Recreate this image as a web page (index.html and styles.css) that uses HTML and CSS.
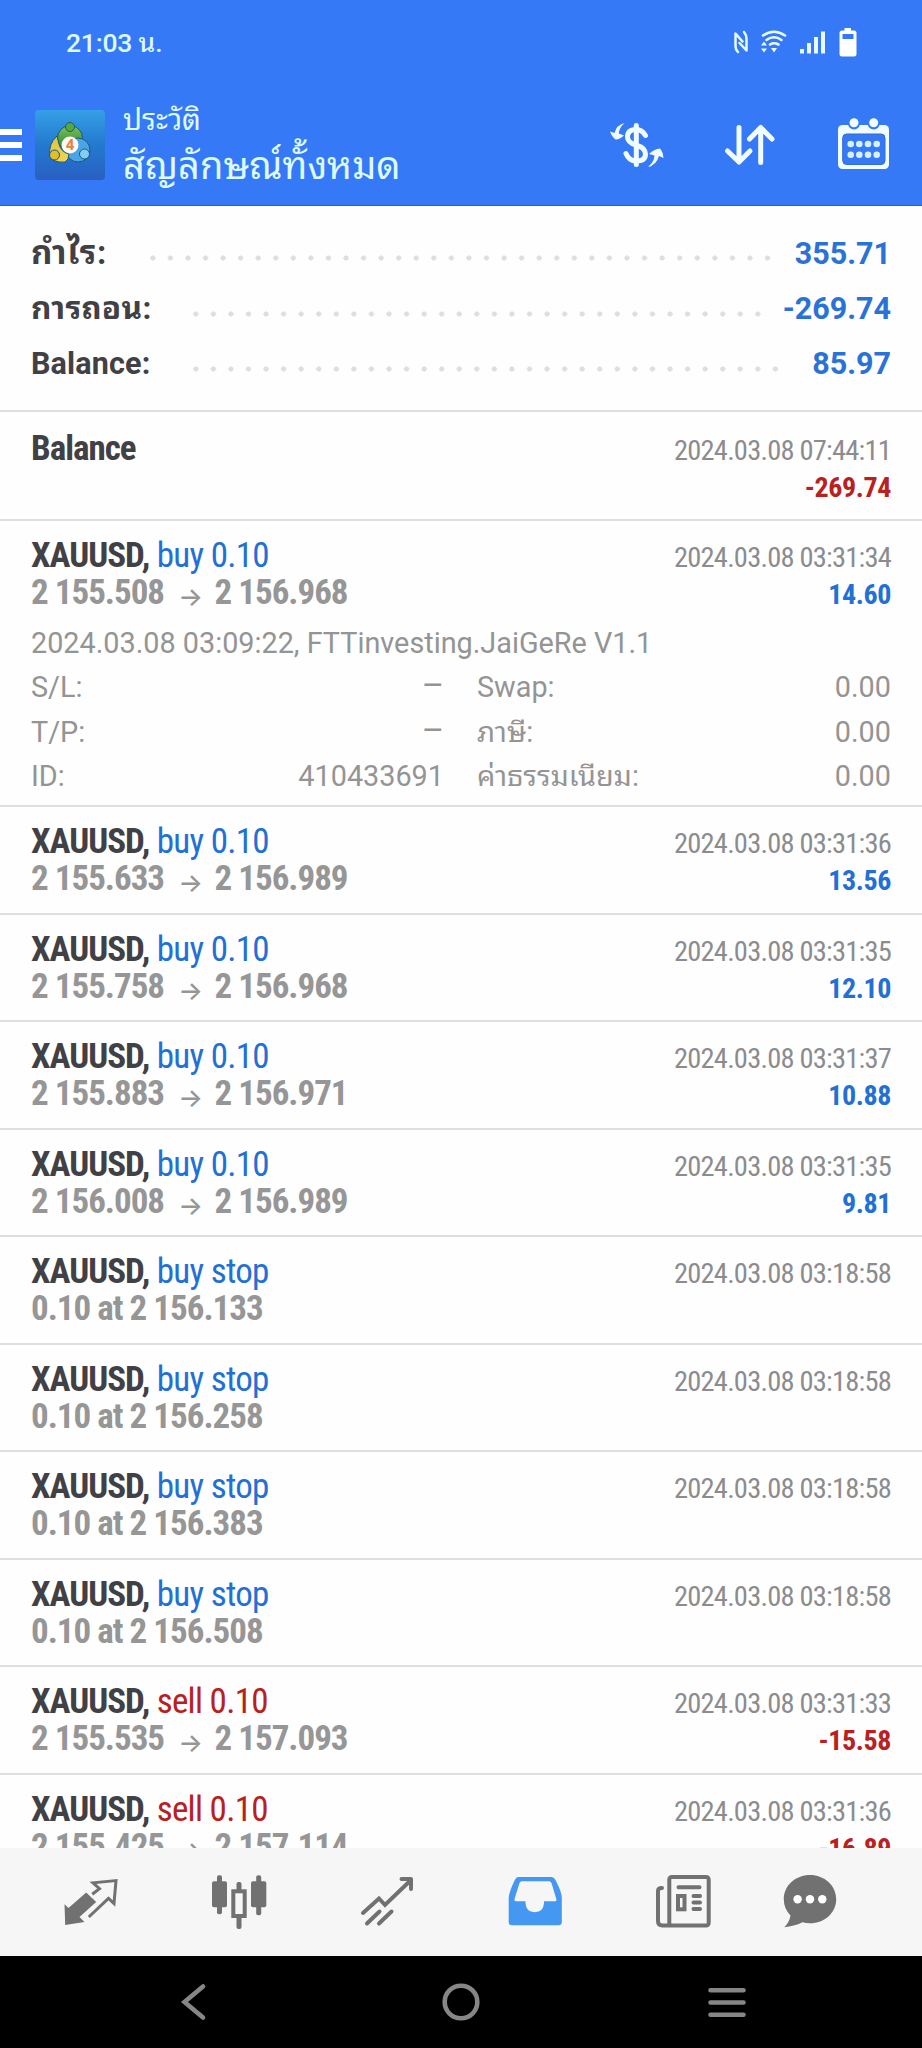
FILE: index.html
```
<!DOCTYPE html>
<html lang="th">
<head>
  <meta charset="UTF-8">
  <meta name="viewport" content="width=device-width, initial-scale=1.0">
  <title>ประวัติ</title>
  <link rel="stylesheet" href="styles.css">
</head>
<body>
  <header class="header">
    <div class="status-bar">
      <span class="clock">21:03 น.</span>
      <div class="status-icons">
        <svg width="14" height="30" viewBox="0 0 14 30" fill="none" stroke="#e6faff" stroke-width="2.5" stroke-linecap="round" stroke-linejoin="round">
          <path d="M4 25 Q1.500 23 1.500 18 V6.500 L8.500 14.500"/>
          <path d="M10 5 Q12.500 8 12.500 12 V23.500 L5.500 16"/>
        </svg>
        <svg width="26" height="30" viewBox="0 0 26 30" fill="none" stroke="#e6faff" stroke-width="2.6" stroke-linecap="round">
          <path d="M2 8.5 Q13 1 24 8.5"/>
          <path d="M5.5 13 Q13 7.5 20.5 13"/>
          <path d="M9 17.5 Q13 15 17.5 17.5"/>
          <path d="M0 18.5 L3 14.5 L6 18.5 Z M0 21.5 L3 25.5 L6 21.5 Z M10 21 H16 L13 25.5 Z" fill="#e6faff" stroke="none"/>
        </svg>
        <svg width="26" height="30" viewBox="0 0 26 30" fill="#e6faff">
          <rect x="0" y="22" width="4" height="4.500"/>
          <rect x="7" y="16" width="4" height="10.500"/>
          <rect x="14" y="10" width="4" height="16.500"/>
          <rect x="21" y="4.500" width="4" height="22"/>
        </svg>
        <svg width="18" height="30" viewBox="0 0 18 30">
          <path d="M5.500 1 H12 V3.500 H15 Q17.500 3.500 17.500 6 V27 Q17.500 29.500 15 29.500 H3 Q.5 29.500 .5 27 V6 Q.5 3.500 3 3.500 H5.500 Z" fill="#fff"/>
          <rect x="3.500" y="7" width="11" height="5" fill="#3579f6"/>
        </svg>
      </div>
    </div>
    <div class="toolbar">
      <svg class="menu" width="22" height="34" viewBox="0 0 22 34" fill="#fff">
        <rect y="1" width="22" height="6"/>
        <rect y="14" width="22" height="6"/>
        <rect y="27" width="22" height="6"/>
      </svg>
      <svg class="app-icon" width="70" height="70" viewBox="0 0 70 70">
        <defs>
          <linearGradient id="bg" x1="0" y1="0" x2="0" y2="1"><stop offset="0" stop-color="#36a0e6"/><stop offset=".5" stop-color="#2379cf"/><stop offset="1" stop-color="#2a5fc2"/></linearGradient>
          <linearGradient id="gr" x1="0" y1="0" x2="0" y2="1"><stop offset="0" stop-color="#7fc356"/><stop offset="1" stop-color="#23803a"/></linearGradient>
          <linearGradient id="ye" x1="0" y1="0" x2="0" y2="1"><stop offset="0" stop-color="#d9c53c"/><stop offset="1" stop-color="#efd558"/></linearGradient>
        </defs>
        <rect width="70" height="70" rx="4" fill="url(#bg)"/>
        <g stroke="#1b5a72" stroke-width="1">
          <circle cx="35" cy="28" r="12.500" fill="url(#gr)"/>
          <circle cx="43" cy="40" r="12" fill="#4aa5e8"/>
          <path d="M22 26 Q13 34 15 46 Q18 53 30 52 Q34 50 34 44 Q26 42 24 34 Z" fill="url(#ye)"/>
          <circle cx="35" cy="17" r="4.500" fill="#58a83c"/>
          <circle cx="19.500" cy="45" r="5" fill="#dfbd2d"/>
          <circle cx="49.500" cy="44" r="5" fill="#83cdf5"/>
        </g>
        <circle cx="35" cy="35" r="8.500" fill="#fffaf3"/>
        <text class="app-number" x="35" y="40" text-anchor="middle">4</text>
      </svg>
      <div class="titles">
        <div class="subtitle">ประวัติ</div>
        <div class="title">สัญลักษณ์ทั้งหมด</div>
      </div>
      <div class="actions">
        <svg width="60" height="60" viewBox="0 0 60 60" fill="none" stroke="#f0fcff" stroke-width="5">
          <path d="M30.300 10.500 V49.500" stroke-linecap="round"/>
          <path d="M39.500 20.500 Q36 14.500 30 14.500 Q21.500 14.500 21.500 22 Q21.500 27.500 30 30 Q39.500 33 39.500 39 Q39.500 46 30 46 Q23 46 20 38.500" stroke-linecap="round"/>
          <path d="M18.500 8 Q13 13 12.800 18.500 L18 20.500 Q13 25 9.500 24.500 Q6 22 4 16.500 L8.500 18 Q10.500 10 18.500 8 Z" fill="#f0fcff" stroke="none"/>
          <path d="M42 52 Q48 47 48.500 40.500 L43 39 Q48 34 54 33.500 Q57 37 57.500 43 L53 41 Q50.500 50 42 52 Z" fill="#f0fcff" stroke="none"/>
        </svg>
        <svg width="60" height="60" viewBox="0 0 60 60" fill="none" stroke="#f0fcff" stroke-width="5" stroke-linecap="round" stroke-linejoin="round">
          <path d="M19 12.500 V47 M7.500 36 L19 47 L30 36"/>
          <path d="M40.700 47.500 V13 M29.500 24 L40.700 12.500 L52 24"/>
        </svg>
        <svg width="60" height="60" viewBox="0 0 60 60" fill="#f0fcff">
          <rect x="4" y="10" width="51" height="44" rx="4.500"/>
          <rect x="8.700" y="19" width="42.300" height="30.500" rx="4" fill="#3579f6" stroke="#356ccb" stroke-width="1"/>
          <circle cx="20" cy="8.500" r="6" fill="#3579f6"/>
          <circle cx="39.700" cy="8.500" r="6" fill="#3579f6"/>
          <circle cx="20" cy="7.700" r="4.500"/>
          <circle cx="39.700" cy="7.700" r="4.500"/>
          <g fill="#d5f0ff">
            <circle cx="16.700" cy="29" r="3.300"/><circle cx="25.300" cy="29" r="3.300"/><circle cx="34" cy="29" r="3.300"/><circle cx="42.700" cy="29" r="3.300"/>
            <circle cx="16.700" cy="39.700" r="3.300"/><circle cx="25.300" cy="39.700" r="3.300"/><circle cx="34" cy="39.700" r="3.300"/><circle cx="42.700" cy="39.700" r="3.300"/>
          </g>
        </svg>
      </div>
    </div>
  </header>

  <main class="history">
    <section class="summary">
      <div class="summary-row"><span class="label label-profit">กำไร:</span><i class="dots dots-profit"></i><span class="value">355.71</span></div>
      <div class="summary-row"><span class="label label-withdraw">การถอน:</span><i class="dots dots-withdraw"></i><span class="value">-269.74</span></div>
      <div class="summary-row"><span class="label">Balance:</span><i class="dots dots-balance"></i><span class="value">85.97</span></div>
    </section>

    <article class="deal deal-balance">
      <div class="line"><span class="symbol">Balance</span><span class="time">2024.03.08 07:44:11</span></div>
      <div class="line"><span>&nbsp;</span><span class="amount sell">-269.74</span></div>
    </article>

    <article class="deal deal-open">
      <div class="line"><span><b class="symbol">XAUUSD,</b> <span class="type buy">buy 0.10</span></span><span class="time">2024.03.08 03:31:34</span></div>
      <div class="line"><span class="price">2 155.508 <i class="arrow">→</i> 2 156.968</span><span class="amount buy">14.60</span></div>
      <div class="details">
        <p class="comment">2024.03.08 03:09:22, FTTinvesting.JaiGeRe V1.1</p>
        <p><span>S/L:</span><span class="dash">–</span></p>
        <p><span>Swap:</span><span>0.00</span></p>
        <p><span>T/P:</span><span class="dash">–</span></p>
        <p><span>ภาษี:</span><span>0.00</span></p>
        <p><span>ID:</span><span>410433691</span></p>
        <p><span>ค่าธรรมเนียม:</span><span>0.00</span></p>
      </div>
    </article>

    <article class="deal">
      <div class="line"><span><b class="symbol">XAUUSD,</b> <span class="type buy">buy 0.10</span></span><span class="time">2024.03.08 03:31:36</span></div>
      <div class="line"><span class="price">2 155.633 <i class="arrow">→</i> 2 156.989</span><span class="amount buy">13.56</span></div>
    </article>
    <article class="deal">
      <div class="line"><span><b class="symbol">XAUUSD,</b> <span class="type buy">buy 0.10</span></span><span class="time">2024.03.08 03:31:35</span></div>
      <div class="line"><span class="price">2 155.758 <i class="arrow">→</i> 2 156.968</span><span class="amount buy">12.10</span></div>
    </article>
    <article class="deal">
      <div class="line"><span><b class="symbol">XAUUSD,</b> <span class="type buy">buy 0.10</span></span><span class="time">2024.03.08 03:31:37</span></div>
      <div class="line"><span class="price">2 155.883 <i class="arrow">→</i> 2 156.971</span><span class="amount buy">10.88</span></div>
    </article>
    <article class="deal">
      <div class="line"><span><b class="symbol">XAUUSD,</b> <span class="type buy">buy 0.10</span></span><span class="time">2024.03.08 03:31:35</span></div>
      <div class="line"><span class="price">2 156.008 <i class="arrow">→</i> 2 156.989</span><span class="amount buy">9.81</span></div>
    </article>
    <article class="deal">
      <div class="line"><span><b class="symbol">XAUUSD,</b> <span class="type buy">buy stop</span></span><span class="time">2024.03.08 03:18:58</span></div>
      <div class="line"><span class="price">0.10 at 2 156.133</span></div>
    </article>
    <article class="deal">
      <div class="line"><span><b class="symbol">XAUUSD,</b> <span class="type buy">buy stop</span></span><span class="time">2024.03.08 03:18:58</span></div>
      <div class="line"><span class="price">0.10 at 2 156.258</span></div>
    </article>
    <article class="deal">
      <div class="line"><span><b class="symbol">XAUUSD,</b> <span class="type buy">buy stop</span></span><span class="time">2024.03.08 03:18:58</span></div>
      <div class="line"><span class="price">0.10 at 2 156.383</span></div>
    </article>
    <article class="deal">
      <div class="line"><span><b class="symbol">XAUUSD,</b> <span class="type buy">buy stop</span></span><span class="time">2024.03.08 03:18:58</span></div>
      <div class="line"><span class="price">0.10 at 2 156.508</span></div>
    </article>
    <article class="deal">
      <div class="line"><span><b class="symbol">XAUUSD,</b> <span class="type sell">sell 0.10</span></span><span class="time">2024.03.08 03:31:33</span></div>
      <div class="line"><span class="price">2 155.535 <i class="arrow">→</i> 2 157.093</span><span class="amount sell">-15.58</span></div>
    </article>
    <article class="deal">
      <div class="line"><span><b class="symbol">XAUUSD,</b> <span class="type sell">sell 0.10</span></span><span class="time">2024.03.08 03:31:36</span></div>
      <div class="line"><span class="price">2 155.425 <i class="arrow">→</i> 2 157.114</span><span class="amount sell">-16.89</span></div>
    </article>
  </main>

  <nav class="tabs">
    <a class="tab">
      <svg width="60" height="60" viewBox="0 0 60 60">
        <path d="M3.500 32.300 L7.500 36 L25.200 20.600 L35.200 29.900 L18.500 45 L23.500 50 L4.200 53 Z" fill="#717171"/>
        <path d="M31.200 22.300 L38.500 16.600 L32 10.800 L55 8.600 L53 31.500 L47.500 26.300 L27.800 45" fill="none" stroke="#717171" stroke-width="3"/>
      </svg>
    </a>
    <a class="tab">
      <svg width="60" height="60" viewBox="0 0 60 60" fill="#717171">
        <rect x="3" y="9.300" width="15" height="26" rx="2"/>
        <rect x="8" y="3.300" width="5" height="39" rx="2"/>
        <rect x="42" y="9.300" width="15.300" height="26" rx="2"/>
        <rect x="47.200" y="3.300" width="5" height="40" rx="2"/>
        <rect x="27.500" y="10" width="5" height="47" rx="2"/>
        <rect x="24.300" y="19.300" width="11.400" height="24.700" fill="#f6f6f6" stroke="#717171" stroke-width="4"/>
      </svg>
    </a>
    <a class="tab">
      <svg width="60" height="60" viewBox="0 0 60 60" fill="none" stroke="#717171" stroke-width="4" stroke-linecap="round">
        <path d="M6 41 L22 26.500 L28 33 L54 8"/>
        <path d="M44.500 7 H54 V17" stroke-linejoin="round"/>
        <path d="M10 51.500 L22.500 39.500 M22 51.500 L34.500 39.500"/>
      </svg>
    </a>
    <a class="tab">
      <svg width="60" height="60" viewBox="0 0 60 60" fill="#4498f2" fill-rule="evenodd">
        <path d="M13.500 5 H46.500 Q49 5 50.500 8 Q56.800 20 56.800 26 V50 Q56.800 53.200 53.600 53.200 H6.900 Q3.700 53.200 3.700 50 V26 Q4 20 9.800 8 Q11 5 13.500 5 Z M17 9.300 Q15.300 9.300 14.500 11 L9.500 27 Q9 29.300 11 29.300 H20.500 V31 Q21 40.200 29.700 40.200 Q38.500 40.200 39 31 V29.300 H49.500 Q52 29.300 51.300 27 L46.500 11 Q45.700 9.300 44 9.300 Z"/>
      </svg>
    </a>
    <a class="tab">
      <svg width="60" height="60" viewBox="0 0 60 60" fill="none" stroke="#717171" stroke-width="4" stroke-linecap="round">
        <rect x="16.300" y="5" width="39.400" height="48.500" rx="2.500"/>
        <path d="M9 16 Q5 16 5 19 V49 Q5 53.500 9.500 53.500 H17"/>
        <path d="M25.500 15.300 H46.500 M40.500 24 H47 M40.500 30.600 H47 M40.500 37 H47"/>
        <rect x="25" y="24" width="6.500" height="13.300"/>
      </svg>
    </a>
    <a class="tab tab-chat">
      <svg width="60" height="60" viewBox="0 0 60 60" fill="#717171">
        <path d="M30 3 C44.500 3 56.200 13.700 56.200 27.200 C56.200 40.800 44.500 51.300 30 51.300 Q26 51.300 22.500 50.300 Q14 54.500 4.300 55.200 Q9.500 50 10.500 43.500 Q3.800 36.500 3.800 27.200 C3.800 13.700 15.500 3 30 3 Z"/>
        <g fill="#fff"><circle cx="17.600" cy="27.300" r="4.200"/><circle cx="30" cy="27.300" r="4.200"/><circle cx="42.300" cy="27.300" r="4.200"/></g>
      </svg>
    </a>
  </nav>

  <footer class="android-bar">
    <svg width="40" height="40" viewBox="0 0 40 40"><path d="M28 4.500 L9.500 20 L28 35.500"/></svg>
    <svg width="40" height="40" viewBox="0 0 40 40"><circle cx="20" cy="20" r="16.300"/></svg>
    <svg width="40" height="40" viewBox="0 0 40 40"><path d="M3.500 8.300 H36.500 M3.500 20.500 H36.500 M3.500 32.700 H36.500"/></svg>
  </footer>
</body>
</html>
```
FILE: styles.css
```
* {
  box-sizing: border-box;
}
body {
  margin: 0;
  width: 922px;
  height: 2048px;
  display: flex;
  flex-direction: column;
  overflow: hidden;
  background: #fefefe;
  color: #414145;
  font-family: Roboto, "Noto Sans Thai Looped", "Droid Sans Thai", Loma, Garuda, Waree, Umpush, "Noto Sans", sans-serif;
}
svg {
  display: block;
  flex: none;
}
p {
  margin: 0;
}

/* header */
.header {
  flex: none;
  height: 206px;
  background: #3579f6;
  border-bottom: 1px solid #2f5fb8;
  color: #dcfaff;
}
.status-bar {
  height: 84px;
  padding: 0 65px 0 66px;
  display: flex;
  justify-content: space-between;
  align-items: center;
}
.clock {
  font-size: 26.500px;
  font-weight: 500;
  line-height: 30px;
  padding-top: 1px;
  letter-spacing: -0.200px;
}
.status-icons {
  display: flex;
  gap: 13px;
}
.toolbar {
  height: 121px;
  padding-right: 28px;
  display: flex;
  align-items: center;
}
.app-icon {
  margin-left: 13px;
}
.app-number {
  font: bold 15px Roboto, sans-serif;
  fill: #e8803c;
}
.titles {
  margin-left: 18px;
  white-space: nowrap;
}
.subtitle {
  font-size: 29.500px;
  line-height: 42px;
}
.title {
  font-size: 38px;
  line-height: 50px;
}
.actions {
  margin-left: auto;
  display: flex;
  gap: 54px;
}

/* summary */
.history {
  flex: 1;
  min-height: 0;
  overflow: hidden;
}
.summary {
  height: 204px;
  padding: 19px 31px 0;
}
.summary-row {
  height: 55.500px;
  line-height: 55.500px;
  display: flex;
  align-items: baseline;
  font-size: 30.500px;
  font-weight: bold;
  white-space: nowrap;
}
.summary-row .value {
  margin-left: auto;
  color: #2b72d6;
}
.summary-row .label {
  width: 113px;
  flex: none;
  letter-spacing: 0.150px;
}
.summary-row .label-profit {
  font-size: 33px;
  letter-spacing: 0.800px;
}
.summary-row .label-withdraw {
  font-size: 31.500px;
  letter-spacing: 0.300px;
}
.dots {
  flex: none;
  align-self: center;
  height: 6px;
  margin-top: 11px;
  background: radial-gradient(circle at 8.800px 3px, #dedede 2.300px, transparent 2.900px) repeat-x;
  background-size: 17.570px 6px;
}
.dots-profit {
  width: 632px;
}
.dots-withdraw {
  width: 580px;
  margin-left: 43px;
}
.dots-balance {
  width: 597px;
  margin-left: 43px;
}

/* deals */
.deal {
  height: 107.500px;
  padding: 16px 31px 0;
  border-top: 2px solid #dfdfdf;
}
.deal-balance {
  height: 109px;
  padding-top: 18px;
}
.deal-open {
  height: 286px;
}
.line {
  height: 37px;
  line-height: 37px;
  font-size: 35px;
  display: flex;
  justify-content: space-between;
  align-items: baseline;
  font-stretch: 75%;
  letter-spacing: -0.700px;
  white-space: nowrap;
}
.symbol,
.price {
  font-weight: bold;
  letter-spacing: -1px;
}
.price {
  color: #969696;
}
.arrow {
  position: relative;
  top: 2px;
  margin: 0 6px 0 7px;
  font-family: Inter, sans-serif;
  font-style: normal;
  font-weight: 500;
  font-size: 26px;
  line-height: 1;
  letter-spacing: -1.500px;
}
.time {
  font-size: 28.500px;
  letter-spacing: -0.780px;
  color: #8c8c8f;
}
.amount {
  font-size: 28px;
  font-weight: bold;
  letter-spacing: -0.400px;
}
.buy {
  color: #2370d5;
}
.sell {
  color: #b92020;
}
.details {
  margin-top: 10px;
  display: grid;
  grid-template-columns: 413px 414px;
  column-gap: 33px;
  grid-auto-rows: 44.400px;
  line-height: 44.400px;
  font-size: 28.800px;
  color: #949494;
}
.details p {
  display: flex;
  justify-content: space-between;
  align-items: baseline;
  white-space: nowrap;
}
.details .comment {
  grid-column: 1 / -1;
}
.dash {
  font-size: 34px;
  line-height: 40px;
}

/* bottom tabs */
.tabs {
  flex: none;
  height: 107.500px;
  padding-left: 16.500px;
  display: flex;
  align-items: center;
  background: #f6f6f6;
}
.tab {
  width: 148px;
  display: flex;
  justify-content: center;
}
.tab-chat {
  width: 107px;
}
.android-bar {
  flex: none;
  height: 92.500px;
  padding: 0 175px;
  display: flex;
  justify-content: space-between;
  align-items: center;
  background: #000;
}
.android-bar svg {
  fill: none;
  stroke: #868686;
  stroke-width: 4.600px;
  stroke-linecap: round;
}
```
